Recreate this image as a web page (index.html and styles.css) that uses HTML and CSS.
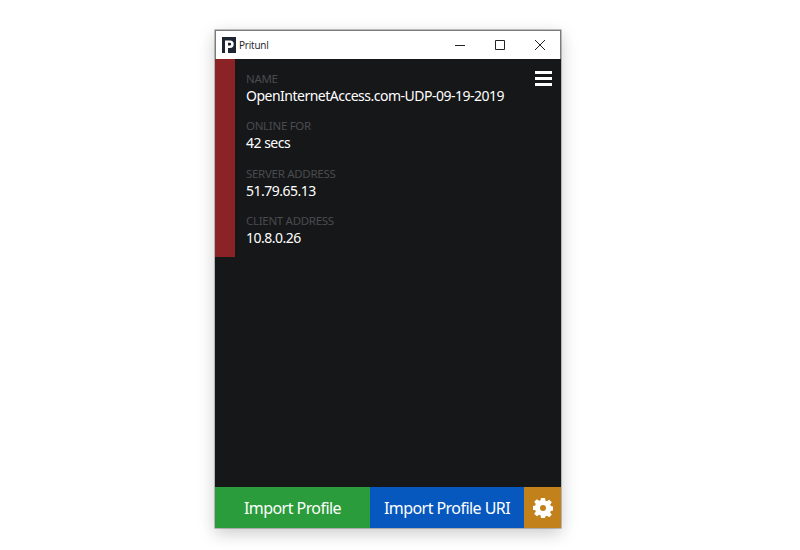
FILE: index.html
```html
<!DOCTYPE html>
<html lang="en">
<head>
<meta charset="utf-8">
<title>Pritunl</title>
<link rel="stylesheet" href="styles.css">
</head>
<body>
<div class="window">
  <header class="titlebar">
    <svg class="logo" width="14" height="16" viewBox="0 0 14 16"><path fill="#1c2530" d="M0 0h14v16H0z"/><path fill="#fff" d="M3 3.500h5a3.700 3.700 0 0 1 0 7.400H6V16H3zM6 5.800v2.800h1.800a1.400 1.400 0 0 0 0-2.800z"/></svg>
    <span class="app-title">Pritunl</span>
    <div class="controls">
      <button class="ctrl"><svg width="10" height="10" viewBox="0 0 10 10"><path d="M0 5.500h10" stroke="#222" fill="none"/></svg></button>
      <button class="ctrl"><svg width="10" height="10" viewBox="0 0 10 10"><path d="M.5.500h9v9h-9z" stroke="#222" fill="none"/></svg></button>
      <button class="ctrl"><svg width="10" height="10" viewBox="0 0 10 10"><path d="M0 0l10 10M10 0L0 10" stroke="#222" fill="none"/></svg></button>
    </div>
  </header>
  <main class="content">
    <section class="profile">
      <div class="status-bar"></div>
      <div class="fields">
        <div class="field"><div class="label">NAME</div><div class="value">OpenInternetAccess.com-UDP-09-19-2019</div></div>
        <div class="field"><div class="label">ONLINE FOR</div><div class="value">42 secs</div></div>
        <div class="field"><div class="label">SERVER ADDRESS</div><div class="value">51.79.65.13</div></div>
        <div class="field"><div class="label">CLIENT ADDRESS</div><div class="value">10.8.0.26</div></div>
      </div>
      <div class="menu"><span></span><span></span><span></span></div>
    </section>
  </main>
  <footer class="actions">
    <button class="btn btn-green">Import Profile</button>
    <button class="btn btn-blue">Import Profile URI</button>
    <button class="btn btn-orange">
      <svg width="20" height="20" viewBox="0 0 20 20"><path fill="#fff" fill-rule="evenodd" d="M8 0h4l.5 2.700 1.400.6 2.300-1.600 2.600 2.600-1.600 2.300.6 1.400 2.700.5v4l-2.700.5-.6 1.400 1.600 2.300-2.600 2.600-2.300-1.600-1.400.6L12 20H8l-.5-2.700-1.400-.6-2.300 1.600-2.600-2.600 1.600-2.300-.6-1.400L-.5 12V8l2.700-.5.6-1.400-1.600-2.300 2.600-2.600 2.300 1.600 1.400-.6zM10 7a3 3 0 1 0 0 6 3 3 0 0 0 0-6z"/></svg>
    </button>
  </footer>
</div>
</body>
</html>
```
FILE: styles.css
```css
* { box-sizing: border-box; }
html, body { margin: 0; height: 100%; }
body { background: #fff; padding: 30px 0 0 215px; overflow: hidden; }
.window {
  width: 346px;
  height: 498px;
  display: flex;
  flex-direction: column;
  background: #161719;
  box-shadow: 0 0 0 .5px rgba(90, 90, 90, .7), 0 5px 16px rgba(0, 0, 0, .22);
}
.titlebar {
  height: 29px;
  flex: none;
  display: flex;
  align-items: center;
  padding-left: 6px;
  background: #fff;
  border-top: 1px solid #7b7b7b;
  border-left: 1px solid #7b7b7b;
  border-right: 1px solid #7b7b7b;
}
.logo { margin-right: 3px; }
.app-title { font: 10px "Open Sans", sans-serif; letter-spacing: -.2px; color: #222; }
.controls { margin-left: auto; display: flex; }
.ctrl {
  width: 40px;
  height: 28px;
  padding: 0;
  border: 0;
  background: none;
  display: flex;
  align-items: center;
  justify-content: center;
}
.content { flex: 1; min-height: 0; }
.profile { display: flex; height: 198px; position: relative; }
.status-bar { width: 20px; background: #8b2226; }
.fields { padding: 12px 0 0 11px; font-family: "Noto Sans", sans-serif; }
.field { height: 47.300px; }
.label { font-size: 11.500px; line-height: 15px; letter-spacing: -.3px; color: #4a4b4e; }
.value { font-size: 14px; line-height: 20px; letter-spacing: -.5px; color: #fff; white-space: nowrap; }
.menu {
  position: absolute;
  top: 12px;
  right: 9px;
  width: 17px;
  display: flex;
  flex-direction: column;
  gap: 3px;
}
.menu span { height: 3px; background: #fff; }
.actions { flex: none; height: 41px; display: flex; }
.btn {
  border: 0;
  padding: 0;
  color: #fff;
  font: 16px "Noto Sans", sans-serif;
  letter-spacing: -.55px;
  display: flex;
  align-items: center;
  justify-content: center;
}
.btn-green { width: 155px; background: #2b9c3b; }
.btn-blue { width: 154px; background: #0658be; }
.btn-orange { flex: 1; background: #c3811b; }
```
